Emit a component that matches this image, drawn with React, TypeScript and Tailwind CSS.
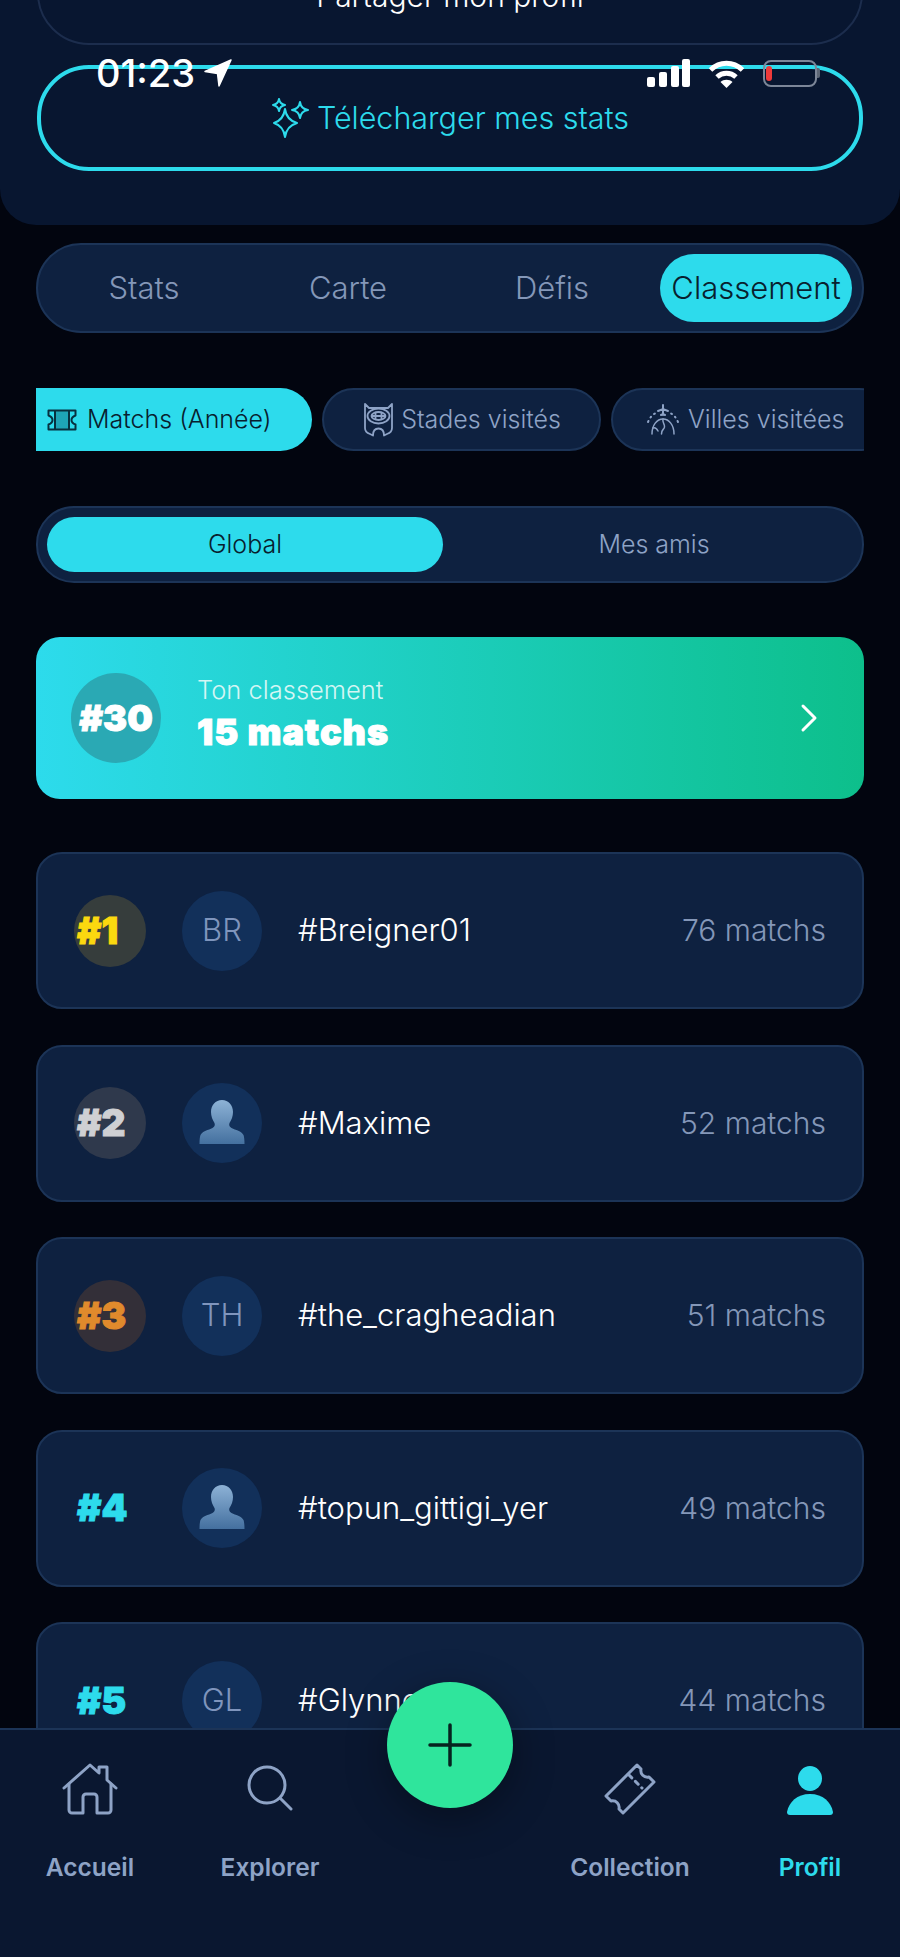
import React from 'react'

const mainFont = "font-['Inter',sans-serif] font-light"
const heavy = "font-['Inter',sans-serif] font-black [-webkit-text-stroke:1px_currentColor]"

function Sparkles() {
  return (
    <svg width="38" height="40" viewBox="0 0 38 40" fill="none" stroke="#2ddbec" strokeWidth="2" strokeLinejoin="round">
      <path d="M14 11Q15.500 22 26 25 15.500 28 14 39 12.500 28 3 25 12.500 22 14 11z" />
      <path d="M29 4Q30 11 37 12 30 13 29 20 28 13 21 12 28 11 29 4z" />
      <path d="M8 1Q8.800 6 14 7 8.800 8 8 13 7.200 8 2 7 7.200 6 8 1z" />
    </svg>
  )
}

function TicketSmall() {
  return (
    <svg width="30" height="22" viewBox="0 0 30 22" fill="none" stroke="#07303f" strokeWidth="2" strokeLinejoin="round">
      <rect x="8" y="1.500" width="14" height="19" fill="#1ea4b6" stroke="none" />
      <path d="M1.500 1.500h27v5c-3 1-4 2.500-4 4.500s1 3.500 4 4.500v5h-27v-5c3-1 4-2.500 4-4.500s-1-3.500-4-4.500z" />
      <path d="M8 1.500v19M22 1.500v19" />
    </svg>
  )
}

function StadiumIcon() {
  return (
    <svg width="33" height="35" viewBox="0 0 33 35" fill="none" stroke="#8ea3c6" strokeWidth="1.800" strokeLinejoin="round">
      <path d="M3 2v24c0 3 2 5 5 6l3 1.500c0-5 2-7 5.500-7s5.500 2 5.500 7l3-1.500c3-1 5-3 5-6V2l-4 4H7z" />
      <ellipse cx="16.500" cy="14" rx="11" ry="7.500" />
      <ellipse cx="16.500" cy="14" rx="7" ry="4" />
      <path d="M9.500 14h14M13.500 10.500v7M19.500 10.500v7" />
    </svg>
  )
}

function CityIcon() {
  return (
    <svg width="34" height="32" viewBox="0 0 34 32" fill="none" stroke="#8ea3c6" strokeWidth="1.500" strokeLinecap="round">
      <path d="M6 30c0-9 5-15 11-15s11 6 11 15" />
      <path d="M17 15c-1 4 2 5 1.500 8s-3 2-3 7M7 24c3-1 4 1 5 3" />
      <path d="M17 1v10M12 7l5-2 5 2M15 11l2-1 2 1" strokeWidth="2" />
      <path d="M2 18Q5 11 10 9M32 18Q29 11 24 9" strokeDasharray="1 4" strokeWidth="2" />
    </svg>
  )
}

function PersonAvatar({ id }: { id: string }) {
  return (
    <svg width="48" height="48" viewBox="0 0 48 48">
      <defs>
        <linearGradient id={id} x1="0" y1="0" x2="0" y2="1">
          <stop offset="0" stopColor="#8db2d6" />
          <stop offset="1" stopColor="#44709f" />
        </linearGradient>
      </defs>
      <path
        fill={`url(#${id})`}
        d="M24 1c6.500 0 11 5 11 12 0 4-1.500 8-3.500 11-.8 2 0 4 2 5 4 2 10 3 12 7 .6 1.500 1 5 1 9H1.500c0-4 .4-7.500 1-9 2-4 8-5 12-7 2-1 2.800-3 2-5-2-3-3.500-7-3.500-11C13 6 17.500 1 24 1z"
      />
    </svg>
  )
}

function HomeIcon() {
  return (
    <svg width="56" height="52" viewBox="0 0 56 52" fill="none" stroke="#8ea3c6" strokeWidth="3" strokeLinejoin="round" strokeLinecap="round">
      <path d="M2 25L28 2l9 8V4h8v13l9 8" />
      <path d="M7 21v26a3 3 0 0 0 3 3h11V34a3 3 0 0 1 3-3h8a3 3 0 0 1 3 3v16h11a3 3 0 0 0 3-3V21" />
    </svg>
  )
}

function SearchIcon() {
  return (
    <svg className="mb-[4px]" width="46" height="46" viewBox="0 0 46 46" fill="none" stroke="#8ea3c6" strokeWidth="3" strokeLinecap="round">
      <circle cx="20" cy="20" r="18" />
      <path d="M33 33l11 11" />
    </svg>
  )
}

function TicketIcon() {
  return (
    <svg width="52" height="52" viewBox="0 0 52 52" fill="none" stroke="#8ea3c6" strokeWidth="3" strokeLinejoin="round" strokeLinecap="round">
      <path d="M33 2l4 4c-1 5 3 9 8 8l5 5-31 31-4-4c1-5-3-9-8-8l-5-5z" />
      <path d="M25 12l13 13" strokeDasharray="4 5" />
    </svg>
  )
}

function ProfileIcon() {
  return (
    <svg width="46" height="49" viewBox="0 0 46 49" fill="#2ddbec">
      <ellipse cx="23" cy="12.500" rx="12" ry="12.500" />
      <path d="M23 28C10 28 2 36 0 46q0 3 3 3h40q3 0 3-3C44 36 36 28 23 28z" />
    </svg>
  )
}

function StatusBar() {
  return (
    <div className="absolute top-[57px] left-[96px] right-[80px] h-[32px] flex items-center justify-between text-white">
      <div className="flex items-center gap-[8px]">
        <span className="text-[38px] leading-none font-medium font-['Inter',sans-serif]">01:23</span>
        <svg width="30" height="30" viewBox="0 0 30 30" fill="white" stroke="white" strokeWidth="1.500" strokeLinejoin="round">
          <path d="M28 2L2 13.500l12.500 2L16 28z" />
        </svg>
      </div>
      <div className="flex items-center gap-[19px]">
        <svg width="43" height="28" viewBox="0 0 43 28" fill="white">
          <rect x="0" y="18" width="8" height="10" rx="2" />
          <rect x="12" y="13" width="8" height="15" rx="2" />
          <rect x="24" y="7" width="8" height="21" rx="2" />
          <rect x="35" y="0" width="8" height="28" rx="2" />
        </svg>
        <svg width="35" height="29" viewBox="0 0 35 29" fill="none" stroke="white" strokeWidth="5">
          <path d="M1.500 11c9-9 23-9 32 0" />
          <path d="M8 18c5.500-5 13.500-5 19 0" />
          <path d="M17.500 29l-6-6c3-3 9-3 12 0z" fill="white" stroke="none" />
        </svg>
        <div className="relative flex items-center">
          <div className="w-[54px] h-[27px] rounded-[8px] border-2 border-[#7c8698] flex items-center pl-[1px]">
            <div className="w-[6px] h-[15px] rounded-[3px] bg-[#ef3a3a]" />
          </div>
          <div className="w-[3px] h-[10px] rounded-r-[2px] bg-[#5c6675]" />
        </div>
      </div>
    </div>
  )
}

const rows = [
  { rank: '#1', color: 'text-[#fbd80f]', circle: 'bg-[#363d3c]', initials: 'BR', name: '#Breigner01', count: '76 matchs' },
  { rank: '#2', color: 'text-[#cfd0d3]', circle: 'bg-[#2f394c]', initials: '', name: '#Maxime', count: '52 matchs' },
  { rank: '#3', color: 'text-[#e08a2c]', circle: 'bg-[#332f38]', initials: 'TH', name: '#the_cragheadian', count: '51 matchs' },
  { rank: '#4', color: 'text-[#2ddbec]', circle: '', initials: '', name: '#topun_gittigi_yer', count: '49 matchs' },
  { rank: '#5', color: 'text-[#2ddbec]', circle: '', initials: 'GL', name: '#Glynne', count: '44 matchs' },
]

function Row({ row }: { row: (typeof rows)[number] }) {
  return (
    <div className="h-[157px] shrink-0 rounded-[26px] border-2 border-[#1c3457] bg-[#0e2140] flex items-center pl-[36px] pr-[36px]">
      <div className={`w-[72px] h-[72px] rounded-full flex items-center pl-[3px] text-[37px] ${heavy} ${row.circle} ${row.color}`}>
        {row.rank}
      </div>
      <div className="ml-[36px] w-[80px] h-[80px] rounded-full bg-[#12305a] flex items-center justify-center text-[31px] text-[#7f95bd]">
        {row.initials || <PersonAvatar id={`p${row.rank.slice(1)}`} />}
      </div>
      <div className="ml-[36px] flex-1 text-[31px] text-white">{row.name}</div>
      <div className="text-[30px] text-[#8497b8]">{row.count}</div>
    </div>
  )
}

function NavItem({ icon, label, active }: { icon: React.ReactNode; label: string; active?: boolean }) {
  return (
    <div className="flex flex-col items-center w-[180px]">
      <div className="h-[54px] flex items-end justify-center">{icon}</div>
      <div className={`mt-[37px] text-[24.500px] leading-[30px] font-semibold font-['Inter',sans-serif] ${active ? 'text-[#2ddbec]' : 'text-[#8ea3c6]'}`}>
        {label}
      </div>
    </div>
  )
}

export default function App() {
  return (
    <div className={`relative w-[900px] h-[1957px] overflow-hidden bg-[#02050f] flex flex-col ${mainFont}`}>
      <div className="shrink-0 h-[225px] rounded-b-[36px] bg-[#081630] px-[37px] flex flex-col gap-[20px]">
        <div className="shrink-0 mt-[-60px] h-[105px] pt-[8px] rounded-[52px] border-2 border-[#1c2d4d] flex items-center justify-center text-[30px] text-white">
          Partager mon profil
        </div>
        <div className="shrink-0 h-[106px] rounded-[52px] border-[4px] border-[#2ddbec] flex items-center justify-center gap-[8px] text-[30.500px] text-[#2ddbec]">
          <Sparkles />
          Télécharger mes stats
        </div>
      </div>

      <div className="flex-1 min-h-0 overflow-hidden px-[36px]">
        <div className="mt-[18px] h-[90px] rounded-[45px] border-2 border-[#1c3457] bg-[#0e2140] flex items-center pl-[4px] pr-[10px] text-[31px] text-[#8497b8]">
          <div className="w-[204px] text-center">Stats</div>
          <div className="w-[204px] text-center">Carte</div>
          <div className="w-[204px] text-center">Défis</div>
          <div className="ml-[6px] flex-1 h-[68px] rounded-[34px] bg-[#2ddbec] flex items-center justify-center text-[#08202e]">
            Classement
          </div>
        </div>

        <div className="mt-[55px] h-[63px] flex gap-[10px] overflow-hidden text-[25px]">
          <div className="shrink-0 w-[276px] rounded-r-[32px] bg-[#2ddbec] flex items-center gap-[10px] pl-[11px] text-[#08202e]">
            <TicketSmall />
            Matchs (Année)
          </div>
          <div className="shrink-0 w-[279px] rounded-[32px] border-2 border-[#1c3457] bg-[#0e2140] flex items-center justify-center gap-[6px] text-[#8ea3c6]">
            <StadiumIcon />
            Stades visités
          </div>
          <div className="shrink-0 w-[280px] rounded-[32px] border-2 border-[#1c3457] bg-[#0e2140] flex items-center gap-[8px] pl-[33px] text-[#8ea3c6]">
            <CityIcon />
            Villes visitées
          </div>
        </div>

        <div className="mt-[55px] h-[77px] rounded-[38px] border-2 border-[#1c3457] bg-[#0e2140] flex items-center pl-[9px] pr-[9px] text-[25px]">
          <div className="w-[396px] h-[55px] rounded-[28px] bg-[#2ddbec] flex items-center justify-center text-[#08202e]">Global</div>
          <div className="flex-1 pl-[12px] text-center text-[#8ea3c6]">Mes amis</div>
        </div>

        <div className="mt-[54px] h-[162px] rounded-[24px] bg-gradient-to-r from-[#2ddbec] to-[#0dbf8b] flex items-center pl-[35px] pr-[45px]">
          <div className={`w-[90px] h-[90px] rounded-full bg-[#2aa9b4] flex items-center justify-center text-[36px] text-white ${heavy}`}>
            #30
          </div>
          <div className="ml-[36px] flex-1 pb-[8px]">
            <div className="text-[25.500px] leading-[30px] mb-[6px] text-[#d4f6f4]">Ton classement</div>
            <div className={`text-[36px] leading-[42px] tracking-[1px] text-white ${heavy}`}>15 matchs</div>
          </div>
          <svg width="20" height="30" viewBox="0 0 20 30" fill="none" stroke="white" strokeWidth="3" strokeLinecap="round" strokeLinejoin="round">
            <path d="M4 3l12 12L4 27" />
          </svg>
        </div>

        <div className="mt-[53px] flex flex-col gap-[35.500px]">
          {rows.map(row => (
            <Row key={row.rank} row={row} />
          ))}
        </div>
      </div>

      <div className="relative shrink-0 h-[229px] border-t-2 border-[#1c3457] bg-[#0a1730] pt-[31px] flex">
        <NavItem icon={<HomeIcon />} label="Accueil" />
        <NavItem icon={<SearchIcon />} label="Explorer" />
        <div className="w-[180px]" />
        <NavItem icon={<TicketIcon />} label="Collection" />
        <NavItem icon={<ProfileIcon />} label="Profil" active />
        <div className="absolute left-[387px] top-[-48px] w-[126px] h-[126px] rounded-full bg-[#2fe59c] shadow-[0_10px_40px_rgba(0,0,0,0.35)] flex items-center justify-center">
          <svg width="44" height="44" viewBox="0 0 44 44" stroke="#06231f" strokeWidth="3.500" strokeLinecap="round">
            <path d="M22 2v40M2 22h40" />
          </svg>
        </div>
      </div>

      <StatusBar />
    </div>
  )
}
